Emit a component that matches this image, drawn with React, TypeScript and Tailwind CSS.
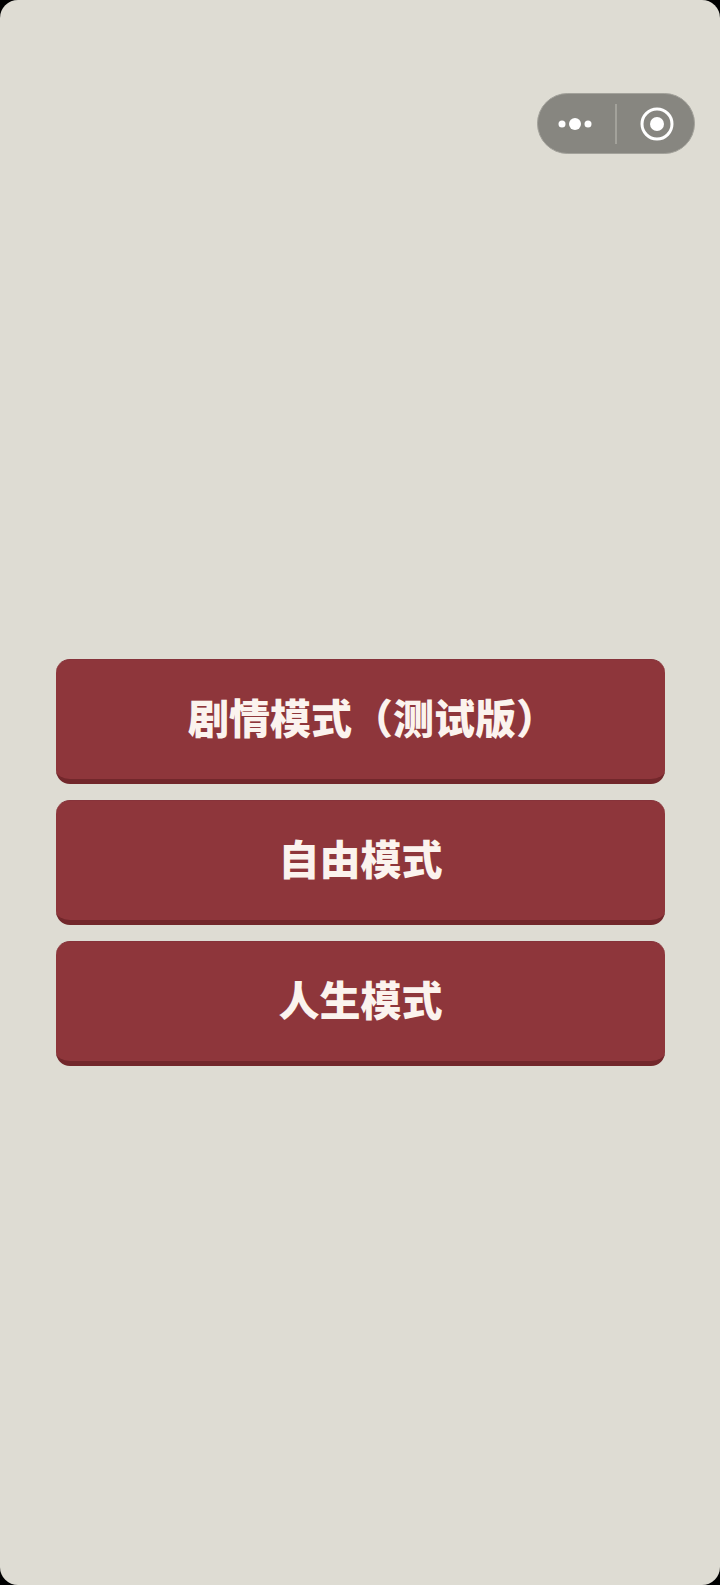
const labels = [
  { text: "剧情模式（测试版）", pad: "pl-[24px]" },
  { text: "自由模式", pad: "pl-0" },
  { text: "人生模式", pad: "pl-0" },
];

export default function App() {
  return (
    <div className="relative h-[1585px] w-[720px] overflow-hidden bg-black">
      <div className="flex h-full flex-col gap-4 rounded-[18px] bg-[#dedcd3] pl-[56px] pr-[55px] pt-[659px]">
        {labels.map((label) => (
          <button
            key={label.text}
            className={`flex h-[125px] w-full items-center justify-center rounded-[14px] border-t border-b-[5px] border-t-[#86333a] border-b-[#72272b] bg-[#8e363b] pb-[6px] text-[41px] font-black leading-none text-[#fbf3ee] [font-family:'Noto_Sans_CJK_SC',sans-serif] ${label.pad}`}
          >
            {label.text}
          </button>
        ))}
      </div>
      <div className="absolute left-[537px] top-[93px] flex h-[61px] w-[158px] items-center rounded-full border border-[#a3a29b] bg-[#878680]">
        <div className="flex w-[74px] items-center justify-center">
          <svg width="36" height="14" viewBox="0 0 36 14" fill="#ffffff">
            <circle cx="5" cy="7" r="3.5" />
            <circle cx="18" cy="7" r="6" />
            <circle cx="31" cy="7" r="3.5" />
          </svg>
        </div>
        <div className="ml-[3px] h-[40px] w-[2px] bg-[#a3a29b]" />
        <div className="flex flex-1 items-center justify-center pl-[2px]">
          <svg width="34" height="34" viewBox="0 0 34 34">
            <circle cx="17" cy="17" r="15" fill="none" stroke="#ffffff" strokeWidth="3" />
            <circle cx="17" cy="17" r="7" fill="#ffffff" />
          </svg>
        </div>
      </div>
    </div>
  );
}
